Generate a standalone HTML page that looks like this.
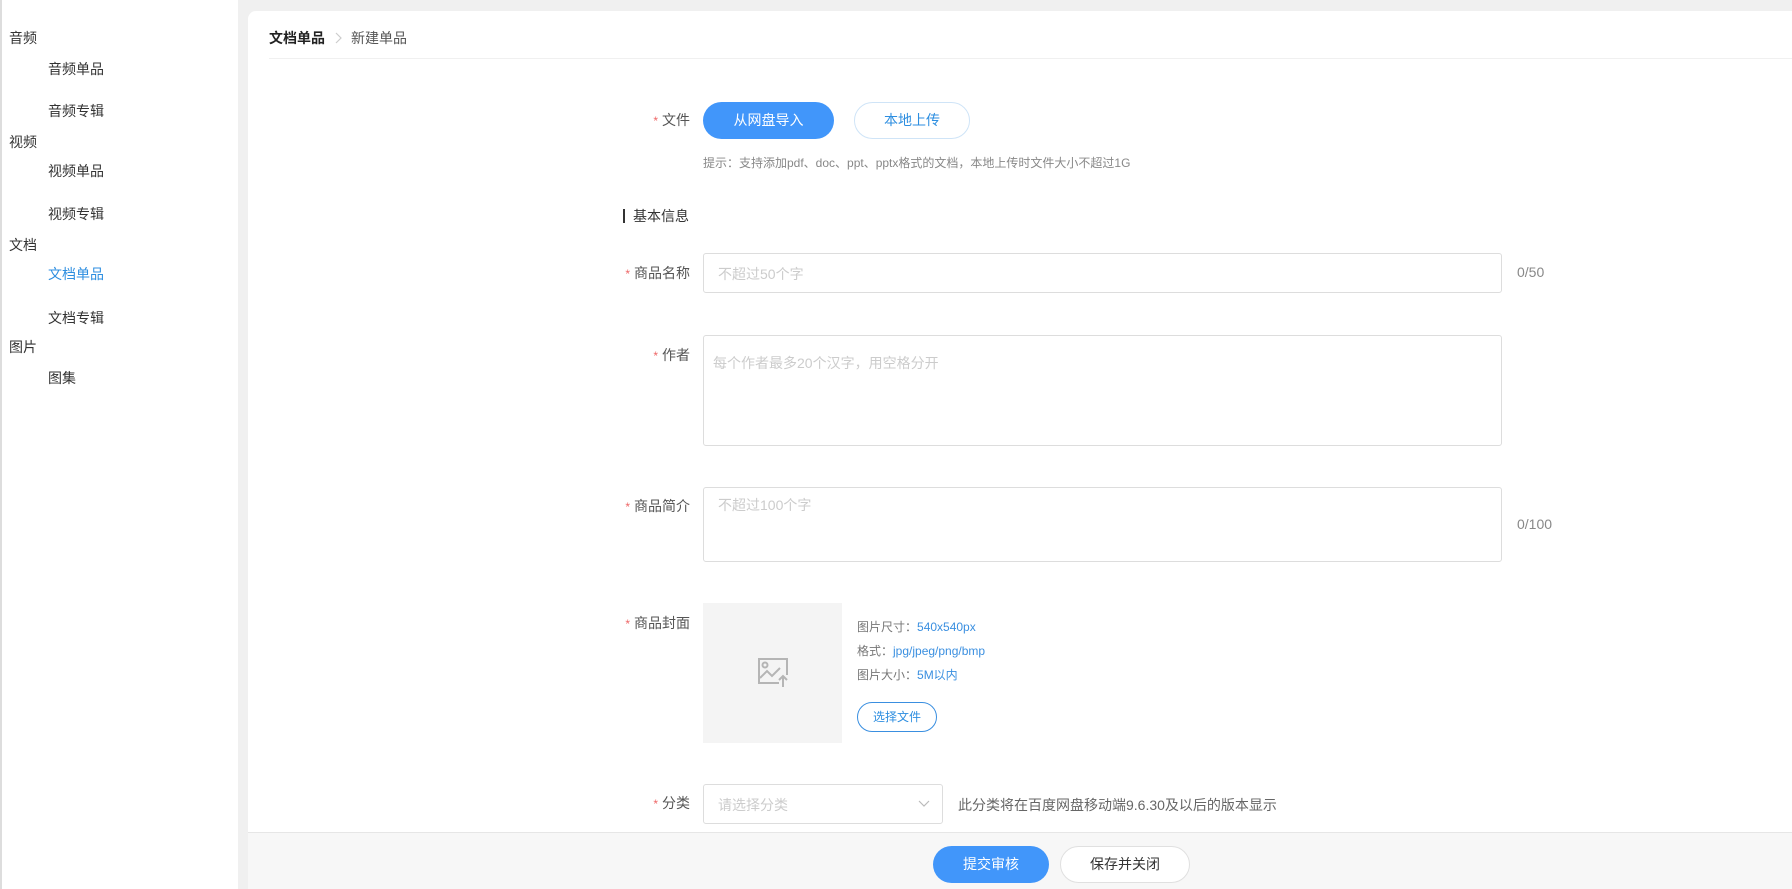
<!DOCTYPE html>
<html style="overflow:hidden;width:1792px;height:889px"><head><meta charset="utf-8"><style>
*{margin:0;padding:0;box-sizing:border-box}
body{width:1792px;height:889px;overflow:hidden;background:#f0f0f0;font-family:"Liberation Sans","Noto Sans CJK SC",sans-serif;font-size:14px;color:#333;position:relative}
.abs{position:absolute;white-space:nowrap}
.side{position:absolute;left:0;top:0;width:238px;height:889px;background:#fff;border-left:2px solid #ddd}
.side div{position:absolute;line-height:20px;font-size:14px;color:#333}
.card{position:absolute;left:248px;top:11px;width:1544px;height:878px;background:#fff;border-radius:8px 0 0 0}
.lbl{position:absolute;right:1102px;line-height:20px;font-size:14px;color:#555;text-align:right}
.lbl b{color:#e66;font-weight:normal;font-size:12px;margin-right:4px}
.inp{position:absolute;left:703px;border:1px solid #ddd;border-radius:3px;background:#fff}
.ph{position:absolute;color:#ccc;font-size:14px}
.blue{color:#3a8fe0}
</style></head><body>
<div class="side">
<div style="left:7px;top:28px">音频</div>
<div style="left:46px;top:59px">音频单品</div>
<div style="left:46px;top:101px">音频专辑</div>
<div style="left:7px;top:132px">视频</div>
<div style="left:46px;top:161px">视频单品</div>
<div style="left:46px;top:204px">视频专辑</div>
<div style="left:7px;top:235px">文档</div>
<div style="left:46px;top:264px;color:#2d8ee0">文档单品</div>
<div style="left:46px;top:308px">文档专辑</div>
<div style="left:7px;top:337px">图片</div>
<div style="left:46px;top:368px">图集</div>
</div>
<div class="card"></div>
<div class="abs" style="left:269px;top:28px;line-height:20px;font-weight:bold;color:#222">文档单品</div>
<svg class="abs" style="left:334px;top:32px" width="8" height="12" viewBox="0 0 8 12" fill="none" stroke="#ccc" stroke-width="1.2"><path d="M2 1l5 5-5 5"/></svg>
<div class="abs" style="left:351px;top:28px;line-height:20px;color:#555">新建单品</div>
<div class="abs" style="left:269px;top:58px;width:1523px;height:1px;background:#f0f0f0"></div>

<div class="lbl" style="top:110px"><b>*</b>文件</div>
<div class="abs" style="left:703px;top:102px;width:131px;height:37px;border-radius:19px;background:#4196fa;color:#fff;text-align:center;line-height:37px">从网盘导入</div>
<div class="abs" style="left:854px;top:102px;width:116px;height:37px;border-radius:19px;border:1px solid #cfe4f7;color:#2d8ee0;text-align:center;line-height:35px">本地上传</div>
<div class="abs" style="left:703px;top:155px;font-size:12px;color:#888;line-height:16px">提示：支持添加pdf、doc、ppt、pptx格式的文档，本地上传时文件大小不超过1G</div>

<div class="abs" style="left:623px;top:209px;width:2px;height:14px;background:#333"></div>
<div class="abs" style="left:633px;top:206px;line-height:20px;color:#333">基本信息</div>

<div class="lbl" style="top:263px"><b>*</b>商品名称</div>
<div class="inp" style="top:253px;width:799px;height:40px"></div>
<div class="ph" style="left:718px;top:264px">不超过50个字</div>
<div class="abs" style="left:1517px;top:264px;color:#888">0/50</div>

<div class="lbl" style="top:345px"><b>*</b>作者</div>
<div class="inp" style="top:335px;width:799px;height:111px"></div>
<div class="ph" style="left:713px;top:353px">每个作者最多20个汉字，用空格分开</div>

<div class="lbl" style="top:496px"><b>*</b>商品简介</div>
<div class="inp" style="top:487px;width:799px;height:75px"></div>
<div class="ph" style="left:718px;top:495px">不超过100个字</div>
<div class="abs" style="left:1517px;top:516px;color:#888">0/100</div>

<div class="lbl" style="top:613px"><b>*</b>商品封面</div>
<div class="abs" style="left:703px;top:603px;width:139px;height:140px;background:#f4f4f4"></div>
<svg class="abs" style="left:757px;top:657px" width="34" height="32" viewBox="0 0 34 32" fill="none" stroke="#b5b5b5" stroke-width="2"><path d="M22 26H2V2h28v16"/><circle cx="8" cy="8" r="2.5"/><path d="M3 21l7-7 5 5 8-8"/><path d="M26 30V19M22 23l4-4 4 4"/></svg>
<div class="abs" style="left:857px;top:619px;font-size:12px;color:#777;line-height:16px">图片尺寸：<span class="blue">540x540px</span></div>
<div class="abs" style="left:857px;top:643px;font-size:12px;color:#777;line-height:16px">格式：<span class="blue">jpg/jpeg/png/bmp</span></div>
<div class="abs" style="left:857px;top:667px;font-size:12px;color:#777;line-height:16px">图片大小：<span class="blue">5M以内</span></div>
<div class="abs" style="left:857px;top:702px;width:80px;height:30px;border:1px solid #3a8fe0;border-radius:15px;color:#2d8ee0;font-size:12px;text-align:center;line-height:28px">选择文件</div>

<div class="lbl" style="top:793px"><b>*</b>分类</div>
<div class="inp" style="top:784px;width:240px;height:40px"></div>
<div class="ph" style="left:718px;top:795px">请选择分类</div>
<svg class="abs" style="left:918px;top:798px" width="12" height="10" viewBox="0 0 12 10" fill="none" stroke="#bbb" stroke-width="1.2"><path d="M1 3l5 5 5-5"/></svg>
<div class="abs" style="left:958px;top:795px;color:#666">此分类将在百度网盘移动端9.6.30及以后的版本显示</div>

<div class="abs" style="left:248px;top:832px;width:1544px;height:57px;background:#f7f7f7;border-top:1px solid #e6e6e6"></div>
<div class="abs" style="left:933px;top:846px;width:116px;height:37px;border-radius:19px;background:#4196fa;color:#fff;text-align:center;line-height:37px">提交审核</div>
<div class="abs" style="left:1060px;top:846px;width:130px;height:37px;border-radius:19px;background:#fff;border:1px solid #e0e0e0;color:#333;text-align:center;line-height:35px">保存并关闭</div>
</body></html>
